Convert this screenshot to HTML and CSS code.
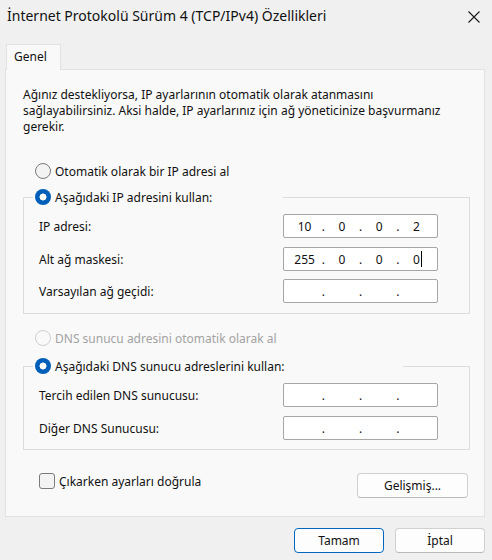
FILE: index.html
```html
<!DOCTYPE html>
<html lang="tr">
<head>
<meta charset="utf-8">
<title>İnternet Protokolü Sürüm 4 (TCP/IPv4) Özellikleri</title>
<link rel="stylesheet" href="styles.css">
</head>
<body>
<div class="dialog">
  <div class="titlebar">
    <span class="title">İnternet Protokolü Sürüm 4 (TCP/IPv4) Özellikleri</span>
    <svg class="close" width="12" height="12" viewBox="0 0 12 12"><path d="M0.5 0.5 L11.5 11.5 M11.5 0.5 L0.5 11.5" stroke="#1a1a1a" stroke-width="1.1" fill="none"/></svg>
  </div>
  <div class="tabs"><div class="tab">Genel</div></div>
  <div class="panel">
    <p class="desc">Ağınız destekliyorsa, IP ayarlarının otomatik olarak atanmasını<br>sağlayabilirsiniz. Aksi halde, IP ayarlarınız için ağ yöneticinize başvurmanız<br>gerekir.</p>

    <div class="radio-row first"><span class="radio"></span><span>Otomatik olarak bir IP adresi al</span></div>
    <fieldset class="group g1">
      <legend class="legend-ip"><span class="radio checked"></span><span>Aşağıdaki IP adresini kullan:</span></legend>
      <div class="field"><span>IP adresi:</span><div class="ip"><span>10</span><i>.</i><span>0</span><i>.</i><span>0</span><i>.</i><span>2</span></div></div>
      <div class="field f2"><span>Alt ağ maskesi:</span><div class="ip"><span>255</span><i>.</i><span>0</span><i>.</i><span>0</span><i>.</i><span class="caret">0</span></div></div>
      <div class="field f3"><span>Varsayılan ağ geçidi:</span><div class="ip"><span></span><i>.</i><span></span><i>.</i><span></span><i>.</i><span></span></div></div>
    </fieldset>

    <div class="radio-row dns1 disabled"><span class="radio"></span><span>DNS sunucu adresini otomatik olarak al</span></div>
    <fieldset class="group g2">
      <legend class="legend-dns"><span class="radio checked"></span><span>Aşağıdaki DNS sunucu adreslerini kullan:</span></legend>
      <div class="field"><span>Tercih edilen DNS sunucusu:</span><div class="ip"><span></span><i>.</i><span></span><i>.</i><span></span><i>.</i><span></span></div></div>
      <div class="field f2"><span>Diğer DNS Sunucusu:</span><div class="ip"><span></span><i>.</i><span></span><i>.</i><span></span><i>.</i><span></span></div></div>
    </fieldset>

    <div class="bottom-row">
      <div class="check-row"><span class="checkbox"></span><span>Çıkarken ayarları doğrula</span></div>
      <div class="btn adv">Gelişmiş...</div>
    </div>
  </div>
  <div class="actions">
    <div class="btn primary">Tamam</div>
    <div class="btn">İptal</div>
  </div>
</div>
</body>
</html>
```
FILE: styles.css
```css
* { box-sizing: border-box; }
html, body { margin: 0; padding: 0; }
body {
  width: 492px;
  height: 560px;
  background: #f0f0f0;
  font-family: "Segoe UI", "Noto Sans", sans-serif;
  font-size: 12px;
  color: #111111;
  overflow: hidden;
}
.dialog { width: 492px; height: 560px; }

.titlebar {
  height: 44px;
  display: flex;
  align-items: flex-start;
  justify-content: space-between;
  padding: 7px 12px 0 7px;
}
.title { font-size: 14px; line-height: 18px; color: #111111; }
.close { margin-top: 4px; }

.tabs { display: flex; padding-left: 6px; }
.tab {
  position: relative;
  z-index: 1;
  width: 55px;
  height: 26px;
  margin-bottom: -1px;
  background: #f9f9f9;
  border: 1px solid #e2e2e2;
  border-bottom: none;
  padding: 4px 0 0 7px;
  line-height: 16px;
}

.panel {
  margin: 0 7px 0 5px;
  background: #f9f9f9;
  border: 1px solid #e2e2e2;
  padding: 17px 14px 18px 17px;
}
.desc { margin: 0; line-height: 16px; }

.radio-row {
  display: flex;
  align-items: center;
  height: 20px;
  gap: 4px;
  padding-left: 12px;
}
.radio-row.first { margin-top: 26px; }
.radio-row.dns1 { margin-top: 14px; }
.radio-row.disabled { color: #a3a3a3; }

.radio {
  width: 16px;
  height: 16px;
  border-radius: 50%;
  border: 1px solid #7a7a7a;
  background: #f3f3f3;
  flex: none;
  display: inline-block;
}
.disabled .radio { border-color: #cfcfcf; background: #f9f9f9; }
.radio.checked {
  border: none;
  background: radial-gradient(circle, #ffffff 0 3.2px, #005fb8 3.8px);
}

.group {
  margin: 6px 0 0 0;
  min-width: 0;
  border: 1px solid #dcdcdc;
  padding: 7px 31px 10px 15px;
}
.g1 { margin-top: 6px; }
.g2 { margin-top: 8px; padding-bottom: 9px; }
.group legend {
  display: flex;
  align-items: center;
  gap: 4px;
  height: 20px;
  padding: 0 0 0 2px;
  margin-left: -6px;
  background: #f9f9f9;
}
.legend-ip { width: 250px; }
.legend-dns { width: 370px; }

.field {
  display: flex;
  align-items: center;
  justify-content: space-between;
  height: 24px;
}
.field.f2 { margin-top: 9px; }
.field.f3 { margin-top: 8px; }

.ip {
  width: 155px;
  height: 24px;
  background: #ffffff;
  border: 1px solid #a6a6a6;
  border-radius: 2px;
  display: flex;
  align-items: center;
  padding: 0 2px;
}
.ip span {
  flex: 1;
  text-align: center;
}
.ip i {
  font-style: normal;
  width: 0;
  display: flex;
  justify-content: center;
}
.caret { position: relative; }
.caret::after {
  content: "";
  position: absolute;
  top: 0;
  height: 16px;
  border-left: 1px solid #000;
  margin-left: 1px;
}

.bottom-row {
  display: flex;
  justify-content: space-between;
  align-items: flex-start;
  margin-top: 23px;
  padding-left: 16px;
  padding-right: 2px;
}
.check-row {
  display: flex;
  align-items: center;
  gap: 4px;
  height: 16px;
}
.checkbox {
  width: 16px;
  height: 16px;
  border: 1px solid #7a7a7a;
  border-radius: 3px;
  background: #f3f3f3;
  flex: none;
}

.btn {
  height: 25px;
  width: 90px;
  display: flex;
  align-items: center;
  justify-content: center;
  background: #fdfdfd;
  border: 1px solid #d0d0d0;
  border-bottom-color: #b9b9b9;
  border-radius: 4px;
}
.btn.adv { width: 111px; }
.btn.primary { border-color: #0067c0; }

.actions {
  display: flex;
  justify-content: flex-end;
  gap: 11px;
  margin-top: 11px;
  padding-right: 7px;
}
```
